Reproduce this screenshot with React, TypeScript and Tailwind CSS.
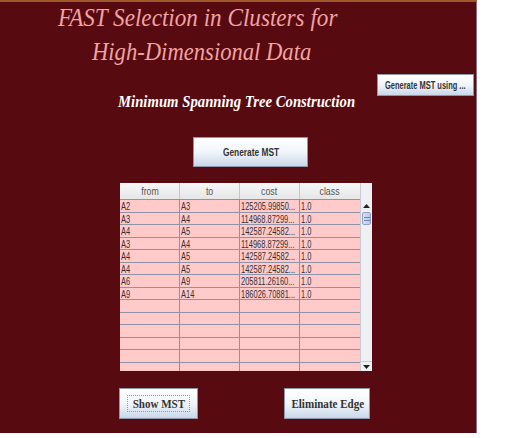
import React from "react";

const rows = [
  ["A2", "A3", "125205.99850...", "1.0"],
  ["A3", "A4", "114968.87299...", "1.0"],
  ["A4", "A5", "142587.24582...", "1.0"],
  ["A3", "A4", "114968.87299...", "1.0"],
  ["A4", "A5", "142587.24582...", "1.0"],
  ["A4", "A5", "142587.24582...", "1.0"],
  ["A6", "A9", "205811.26160...", "1.0"],
  ["A9", "A14", "186026.70881...", "1.0"],
];

const blanks = 6;

const sans = "font-['Liberation_Sans',Arial,sans-serif]";
const swingBtn =
  "block border border-[#8d97ab] bg-gradient-to-b from-white via-[#f1f5fa] to-[#c9d8e8] text-[#333]";

function Cell({ text, last }: { text: string; last?: boolean }) {
  return (
    <div
      className={`w-[60px] h-full pl-[1px] overflow-hidden whitespace-nowrap leading-[12px] text-[11px] text-[#333] ${
        last ? "" : "border-r border-[#8e93a8]"
      }`}
    >
      <span className="inline-block origin-left scale-x-[0.68]">{text}</span>
    </div>
  );
}

export default function App() {
  return (
    <div className="w-[510px] h-[438px] bg-white">
      <div className="w-[477px] h-[433px] bg-[#570a0f] border-t-2 border-t-[#a0582c] border-r border-r-[#8b6a86] flex flex-col">
        {/* title */}
        <div className="font-['Liberation_Serif',serif] italic text-[#f2a3a3] text-[26px] leading-[30px] whitespace-nowrap">
          <div className="pl-[58px] pt-[1px]">
            <span className="inline-block origin-left scale-x-[0.89]">FAST Selection in Clusters for</span>
          </div>
          <div className="pl-[92px] pt-[4px]">
            <span className="inline-block origin-left scale-x-[0.87]">High-Dimensional Data</span>
          </div>
        </div>

        <div className="pl-[377px] mt-[7px]">
          <button
            className={`${swingBtn} ${sans} w-[97px] h-[22px] text-[11px] font-bold whitespace-nowrap overflow-hidden flex items-center justify-center`}
          >
            <span className="inline-block shrink-0 scale-x-[0.68]">Generate MST using ...</span>
          </button>
        </div>

        <div className="pl-[118px] -mt-[4px] font-['Liberation_Serif',serif] italic font-bold text-white text-[16px] leading-[20px] whitespace-nowrap">
          <span className="inline-block origin-left scale-x-[0.92]">Minimum Spanning Tree Construction</span>
        </div>

        <div className="pl-[193px] mt-[25px]">
          <button className={`${swingBtn} ${sans} w-[115px] h-[30px] text-[11px] font-bold`}>
            <span className="inline-block scale-x-[0.76]">Generate MST</span>
          </button>
        </div>

        {/* edge table */}
        <div className={`ml-[120px] mt-[16px] w-[252px] h-[188px] bg-[#eef0f4] flex ${sans}`}>
          <div className="w-[240px] flex flex-col">
            <div className="h-[17px] flex bg-gradient-to-b from-[#f7f7f7] to-[#e6e6e6] border-b border-[#8e93a8]">
              {["from", "to", "cost", "class"].map((h, i) => (
                <div
                  key={h}
                  className={`w-[60px] text-center text-[11px] leading-[16px] text-[#555] ${
                    i < 3 ? "border-r border-[#c4c6cc]" : ""
                  }`}
                >
                  <span className="inline-block scale-x-[0.8]">{h}</span>
                </div>
              ))}
            </div>
            <div className="flex-1 bg-[#ffcaca] overflow-hidden">
              {rows.map((r, i) => (
                <div key={i} className="h-[12.5px] flex border-b border-[#8e93a8]">
                  {r.map((c, j) => (
                    <Cell key={j} text={c} last={j === 3} />
                  ))}
                </div>
              ))}
              {Array.from({ length: blanks }).map((_, i) => (
                <div key={i} className="h-[12.6px] flex border-b border-[#8e93a8]">
                  {[0, 1, 2, 3].map((j) => (
                    <Cell key={j} text="" last={j === 3} />
                  ))}
                </div>
              ))}
            </div>
          </div>
          {/* scrollbar */}
          <div className="w-[12px] flex flex-col pt-[17px] border-l border-[#c9ccd4]">
            <div className="h-[12px] flex items-center justify-center">
              <svg width="7" height="4" viewBox="0 0 7 4">
                <path d="M0 4 L3.5 0 L7 4 Z" fill="#222" />
              </svg>
            </div>
            <div className="h-[13px] mx-[1px] rounded-[2px] border border-[#8fa3c8] bg-gradient-to-r from-[#d7e2f3] to-[#b6c9e8] flex flex-col items-center justify-center gap-[2px]">
              <div className="w-[6px] h-[1px] bg-[#6a83b4]" />
              <div className="w-[6px] h-[1px] bg-[#6a83b4]" />
            </div>
            <div className="flex-1" />
            <div className="h-[10px] flex items-center justify-center border-t border-[#c9ccd4]">
              <svg width="7" height="4" viewBox="0 0 7 4">
                <path d="M0 0 L3.5 4 L7 0 Z" fill="#222" />
              </svg>
            </div>
          </div>
        </div>

        <div className="flex mt-[17px] font-['Liberation_Serif',serif] font-bold text-[13px]">
          <div className="pl-[119px]">
            <button className={`${swingBtn} w-[79px] h-[31px] flex items-center justify-center`}>
              <span className="border border-dotted border-[#8d97ab] leading-[15px] whitespace-nowrap">
                <span className="inline-block scale-x-[0.85]">Show MST</span>
              </span>
            </button>
          </div>
          <div className="pl-[86px]">
            <button className={`${swingBtn} w-[86px] h-[31px] whitespace-nowrap`}>
              <span className="inline-block scale-x-[0.85]">Eliminate Edge</span>
            </button>
          </div>
        </div>
      </div>
    </div>
  );
}
